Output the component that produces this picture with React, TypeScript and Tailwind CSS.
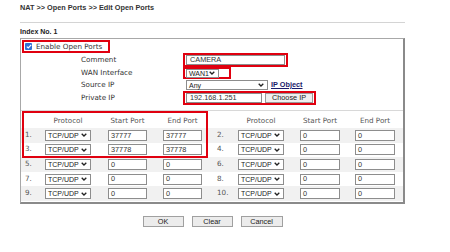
import React from "react";

const DV = "font-['DejaVu_Sans',Verdana,sans-serif]";
const AR = "font-['Liberation_Sans',Arial,sans-serif]";

function Chevron() {
  return (
    <svg width="6" height="4" viewBox="0 0 6 4" className="shrink-0">
      <path d="M0.7 0.7 L3 3 L5.3 0.7" fill="none" stroke="#222" strokeWidth="1.3" />
    </svg>
  );
}

function Sel({ text, className }: { text: string; className: string }) {
  return (
    <div
      className={`flex items-center justify-between border border-[#8d8d8d] bg-white pl-[2px] pr-[3px] text-[7px] leading-none text-[#222] ${AR} ${className}`}
    >
      <span>{text}</span>
      <Chevron />
    </div>
  );
}

function Inp({ text, className }: { text: string; className: string }) {
  return (
    <div
      className={`flex items-center border border-[#8d8d8d] bg-white pl-[2px] text-[7.3px] leading-none text-[#333] ${AR} ${className}`}
    >
      {text}
    </div>
  );
}

const rows = [
  { l: "1.", r: "2.", ls: "37777", le: "37777" },
  { l: "3.", r: "4.", ls: "37778", le: "37778" },
  { l: "5.", r: "6.", ls: "0", le: "0" },
  { l: "7.", r: "8.", ls: "0", le: "0" },
  { l: "9.", r: "10.", ls: "0", le: "0" },
];

export default function App() {
  return (
    <div className="w-[450px] h-[252px] bg-white overflow-hidden relative">
      <div className="pl-[20px] pt-[3px]">
        <div className={`text-[7.3px] font-bold text-[#333] leading-[10px] ${AR}`}>
          NAT &gt;&gt; Open Ports &gt;&gt; Edit Open Ports
        </div>
        <div className="mt-[9px] h-px w-[385px] bg-[#d4d4d4]" />
        <div className={`mt-[4px] text-[7px] font-bold text-[#222] leading-[10px] ${AR}`}>Index No. 1</div>

        {/* Panel */}
        <div className="mt-[1px] w-[385px] border border-[#a8a8a8] border-r-2 border-b-2 border-r-[#8a8a8a] border-b-[#8a8a8a]">
          {/* Enable row */}
          <div className="pl-[1px] pt-[1px]">
            <div className="flex items-center h-[13px] w-[88px] border-2 border-[#e0000f] pl-[1px]">
              <div className="w-[7px] h-[7px] bg-[#2f6fd6] rounded-[1px] flex items-center justify-center">
                <svg width="6" height="5" viewBox="0 0 6 5">
                  <path d="M0.8 2.6 L2.3 4 L5.2 0.9" fill="none" stroke="#fff" strokeWidth="1.2" />
                </svg>
              </div>
              <span className={`ml-[4px] text-[7.2px] leading-none text-[#333] ${DV}`}>Enable Open Ports</span>
            </div>
          </div>

          {/* Form rows */}
          <div className={`text-[7.2px] text-[#333] ${DV}`}>
            <div className="flex items-center h-[14px]">
              <div className="w-[162px] pl-[60px]">Comment</div>
              <div className="h-[14px] w-[105px] border-2 border-[#e0000f] px-[1px] flex items-center">
                <Inp text="CAMERA" className="h-[10px] w-full pl-[3px]" />
              </div>
            </div>
            <div className="flex items-center h-[12px]">
              <div className="w-[162px] pl-[60px]">WAN Interface</div>
              <div className="h-[12px] w-[48px] border-2 border-[#e0000f] pl-[1px] flex items-center">
                <Sel text="WAN1" className="h-[9px] w-[33px]" />
              </div>
            </div>
            <div className="flex items-center h-[12px]">
              <div className="w-[165px] pl-[60px]">Source IP</div>
              <Sel text="Any" className="h-[10px] w-[82px]" />
              <span className={`ml-[3px] text-[7.3px] font-bold underline text-[#1a1a6a] ${AR}`}>IP Object</span>
            </div>
            <div className="flex items-center h-[14px]">
              <div className="w-[162px] pl-[60px]">Private IP</div>
              <div className="h-[14px] w-[133px] border-2 border-[#e0000f] pl-[1px] flex items-center">
                <Inp text="192.168.1.251" className="h-[10px] w-[76px] pl-[3px]" />
                <div
                  className={`ml-[3px] h-[10px] w-[48px] border border-[#9a9a9a] bg-[#efefef] flex items-center justify-center text-[7.3px] leading-none text-[#222] ${AR}`}
                >
                  Choose IP
                </div>
              </div>
            </div>
          </div>

          {/* Ports table */}
          <div className={`relative mt-[5px] border-t border-[#d8d8d8] pt-[3px] text-[7.2px] text-[#555] ${DV}`}>
            <div className="flex items-center h-[14px] pl-[4px]">
              <div className="w-[20px]" />
              <div className="w-[46px] text-center">Protocol</div>
              <div className="w-[39px] ml-[17px] text-center">Start Port</div>
              <div className="w-[39px] ml-[16px] text-center">End Port</div>
              <div className="w-[21px] ml-[15px]" />
              <div className="w-[46px] text-center">Protocol</div>
              <div className="w-[40px] ml-[16px] text-center">Start Port</div>
              <div className="w-[40px] ml-[15px] text-center">End Port</div>
            </div>
            {rows.map((r, i) => (
              <div
                key={r.l}
                className={`flex items-center h-[14.6px] pl-[4px] ${i % 2 === 0 ? "bg-[#f1f1f1]" : "bg-white"}`}
              >
                <div className="w-[20px]">{r.l}</div>
                <Sel text="TCP/UDP" className="h-[11px] w-[46px]" />
                <Inp text={r.ls} className="h-[11px] w-[39px] ml-[17px]" />
                <Inp text={r.le} className="h-[11px] w-[39px] ml-[16px]" />
                <div className="w-[21px] ml-[15px]">{r.r}</div>
                <Sel text="TCP/UDP" className="h-[11px] w-[46px]" />
                <Inp text="0" className="h-[11px] w-[40px] ml-[16px]" />
                <Inp text="0" className="h-[11px] w-[40px] ml-[15px]" />
              </div>
            ))}
            <div className="h-[1px]" />
            <div className="absolute left-[1px] top-0 w-[186px] h-[47px] border-2 border-[#e0000f]" />
          </div>
        </div>

        {/* Buttons */}
        <div className={`mt-[12px] w-[385px] flex justify-center gap-[8px] text-[7.3px] text-[#222] ${AR}`}>
          <div className="h-[11px] w-[41px] border border-[#a0a0a0] bg-[#ececec] flex items-center justify-center leading-none">OK</div>
          <div className="h-[11px] w-[41px] border border-[#a0a0a0] bg-[#ececec] flex items-center justify-center leading-none">Clear</div>
          <div className="h-[11px] w-[42px] border border-[#a0a0a0] bg-[#ececec] flex items-center justify-center leading-none">Cancel</div>
        </div>
      </div>
    </div>
  );
}
